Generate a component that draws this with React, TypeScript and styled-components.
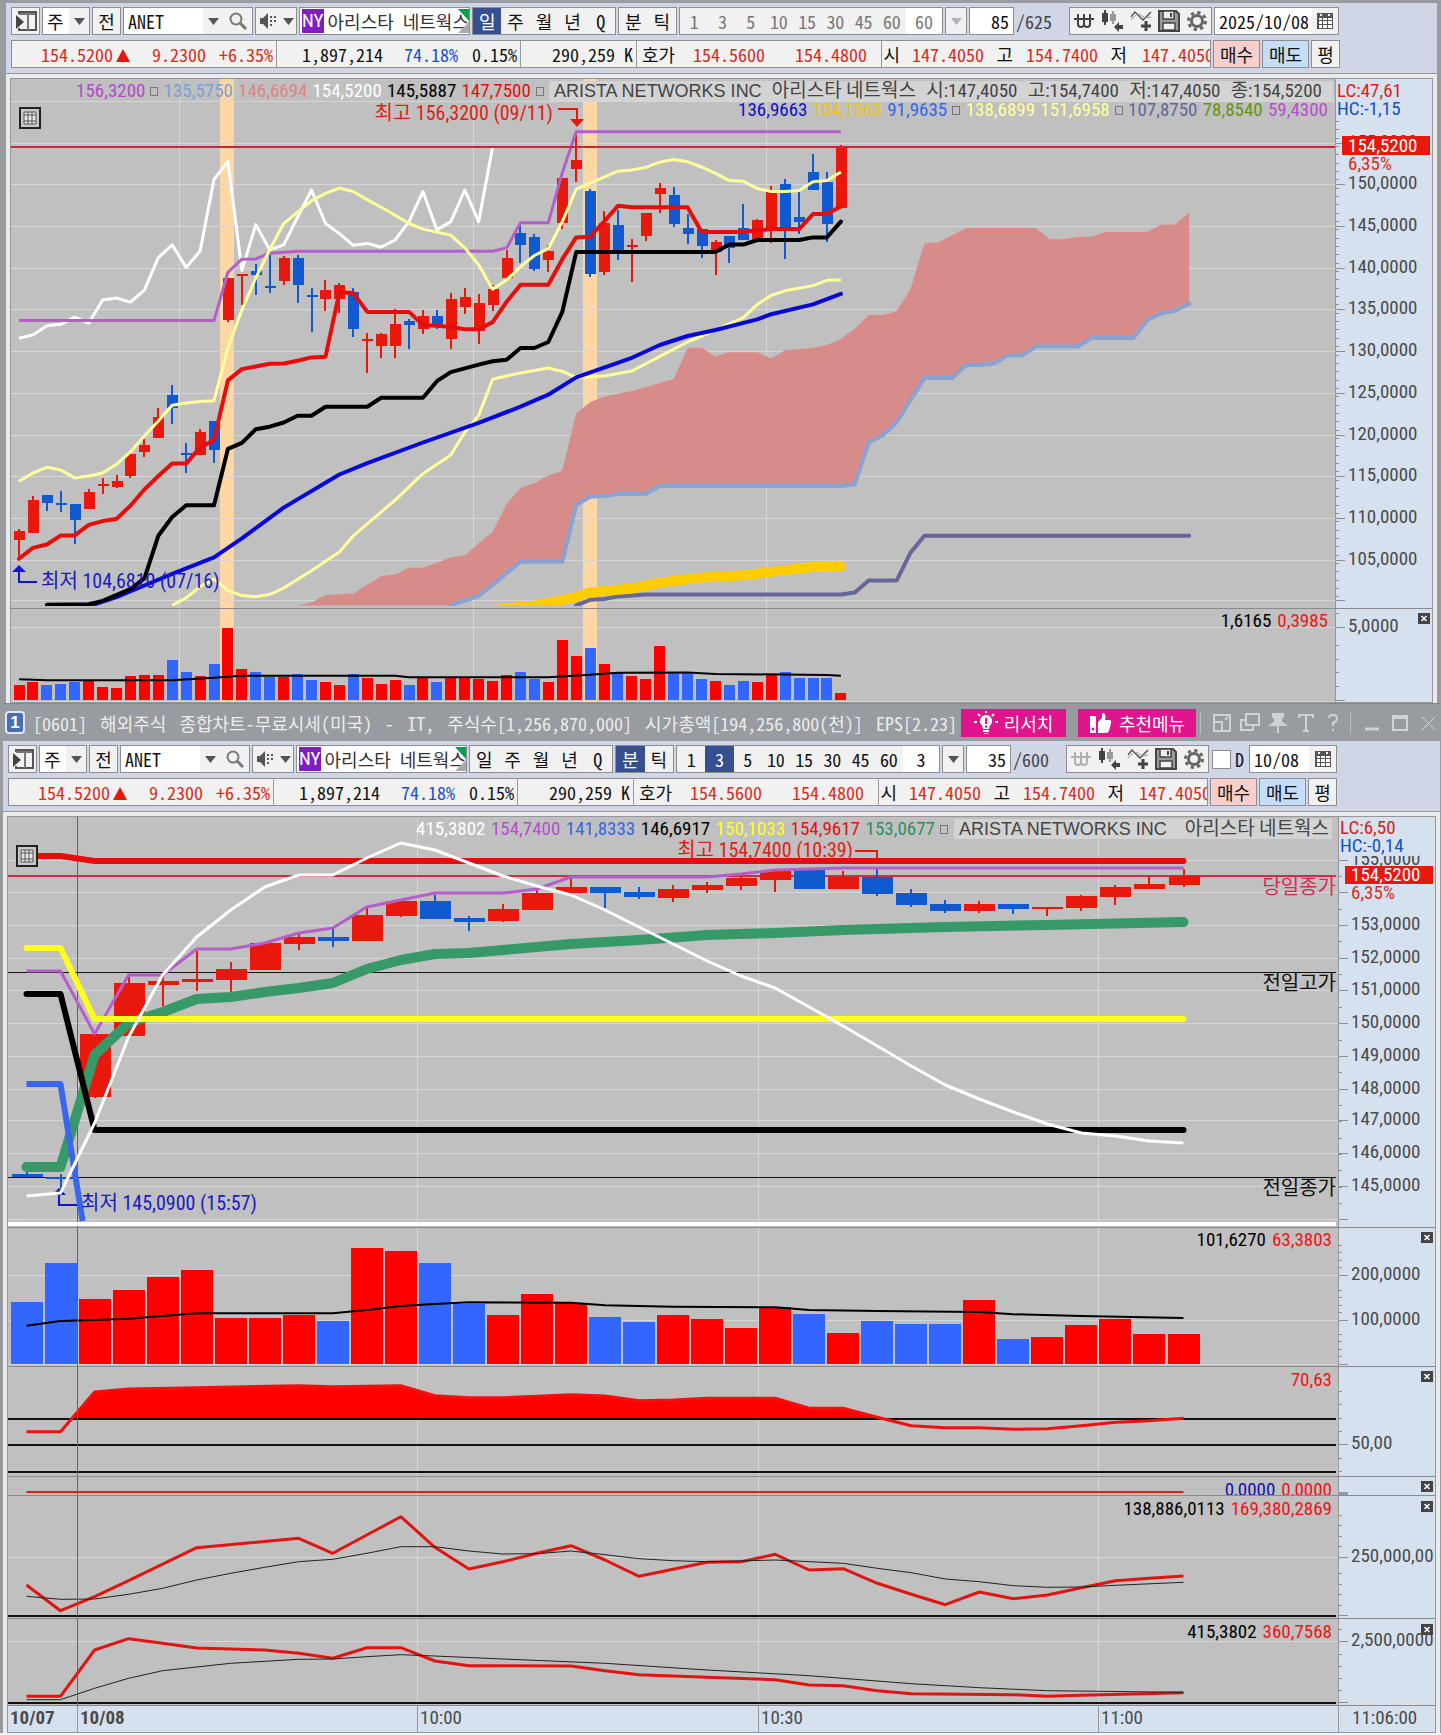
import React from "react";
import styled, { createGlobalStyle } from "styled-components";

const MONO = `"Noto Sans Mono CJK KR", "Noto Sans CJK KR", monospace`;
const NARROW = `"Liberation Sans Narrow", "Roboto Condensed", "Noto Sans CJK KR", sans-serif`;
const WIDE = `"Liberation Sans", "Noto Sans CJK KR", sans-serif`;

const RED = "#e8190c";
const BLUE = "#1159d0";
const VOL_RED = "#fe0000";
const VOL_BLUE = "#3366ff";
const GRID = "#d6d6d6";
const EDGE = "#8e8e92";

const GlobalStyle = createGlobalStyle`
  * { box-sizing: border-box; }
  body { margin: 0; background: #f4f4f4; font-family: ${MONO}; font-size: 18px; line-height: 20px; }
  button, input, select { font: inherit; margin: 0; border-radius: 0; }
  svg { display: block; }
`;

/* ---------- window chrome ---------- */

const Page = styled.main`
  min-width: 1440px;
`;

const Window = styled.section<{ $main?: boolean }>`
  background: #989ca1;
  padding: ${(p) => (p.$main ? "3px 4px 0 6px" : "0 1px 0 3px")};
`;

const Tools = styled.div`
  background: #d0d6e6;
  display: flex;
  flex-direction: column;
  gap: 5px;
  padding: 4px 5px 5px;
`;

const Row = styled.div`
  display: flex;
  gap: 2px;
  height: 28px;
`;

const Group = styled.div<{ $w: number }>`
  display: flex;
  width: ${(p) => p.$w}px;
  border: 1px solid ${EDGE};
  background: #f1f1f1;
  & > * + * { border-left: 1px solid ${EDGE}; }
`;

const Btn = styled.button<{ $on?: boolean; $dim?: boolean; $w?: number; $bg?: string }>`
  flex: ${(p) => (p.$w ? "none" : "1 1 0")};
  width: ${(p) => (p.$w ? `${p.$w}px` : "auto")};
  min-width: 0;
  padding: 0;
  border: 0;
  display: flex;
  align-items: center;
  justify-content: center;
  background: ${(p) => (p.$on ? "#36508f" : p.$bg ?? "#f1f1f1")};
  color: ${(p) => (p.$on ? "#fff" : p.$dim ? "#777" : "#111")};
`;

const Field = styled.input<{ $w: number; $align?: string; $dim?: boolean }>`
  width: ${(p) => p.$w}px;
  border: 0;
  padding: 0 4px;
  background: #fff;
  color: ${(p) => (p.$dim ? "#777" : "#111")};
  text-align: ${(p) => p.$align ?? "left"};
`;

const Pick = styled.select`
  width: 26px;
  border: 0;
  padding: 0 0 0 4px;
  appearance: none;
  background: #fff;
  color: #111;
`;

const Symbol = styled.div`
  position: relative;
  display: flex;
  align-items: center;
  gap: 4px;
  width: 171px;
  overflow: hidden;
  white-space: nowrap;
  border: 1px solid ${EDGE};
  background: #fff;
  padding-left: 2px;
  color: #333;
`;

const Exchange = styled.span`
  background: #7f1fc0;
  color: #fff;
  width: 24px;
  line-height: 24px;
  text-align: center;
  font-family: ${NARROW};
  font-size: 19px;
`;

const Corner = styled.svg`
  position: absolute;
  right: 0;
  top: 1px;
`;

const Total = styled.span`
  width: 51px;
  line-height: 28px;
  color: #444;
`;

const CheckLabel = styled.label`
  display: flex;
  align-items: center;
  gap: 4px;
  margin: 0 3px 0 1px;
  color: #113;
`;

const Check = styled.input`
  appearance: none;
  width: 19px;
  height: 19px;
  border: 1px solid ${EDGE};
  background: #fff;
`;

const QuoteBox = styled.div`
  display: flex;
  width: 1200px;
  overflow: hidden;
  border: 1px solid ${EDGE};
  background: #f1f1f1;
  line-height: 26px;
`;

const Cell = styled.span<{ $w: number; $c?: string; $rule?: boolean }>`
  flex: none;
  width: ${(p) => p.$w}px;
  text-align: right;
  white-space: nowrap;
  color: ${(p) => p.$c ?? "#111"};
  border-right: ${(p) => (p.$rule ? "1px solid #999" : "0")};
  padding-right: ${(p) => (p.$rule ? 3 : 0)}px;
`;

const Up = styled.svg`
  display: inline-block;
  margin-left: 3px;
`;

const TitleBar = styled.header`
  display: flex;
  align-items: center;
  height: 38px;
  color: #ececec;
  white-space: nowrap;
  border-top: 1px solid #85898e;
  padding-left: 2px;
`;

const Badge = styled.span`
  width: 20px;
  height: 23px;
  border: 2px solid #dfe6f5;
  border-radius: 4px;
  background: #4a6cb0;
  color: #fff;
  font: bold 17px/19px ${WIDE};
  text-align: center;
`;

const Title = styled.h1`
  display: flex;
  justify-content: space-between;
  margin: 0 4px 0 8px;
  width: 924px;
  font-size: 18px;
  font-weight: 400;
`;

const Promo = styled.button<{ $w: number }>`
  display: flex;
  align-items: center;
  justify-content: center;
  gap: 6px;
  width: ${(p) => p.$w}px;
  height: 28px;
  margin-right: 12px;
  padding: 0;
  border: 0;
  background: #e0148c;
  color: #fff;
`;

const WinBtns = styled.div`
  display: flex;
  flex: 1;
  align-items: center;
  justify-content: space-between;
  padding-right: 1px;
  margin-left: -8px;
`;

const WinBtn = styled.button`
  border: 0;
  padding: 0;
  background: none;
  color: #cfd1d4;
`;

const Rule = styled.span`
  width: 1px;
  height: 22px;
  margin-right: 4px;
  background: #b9bcc0;
`;

/* ---------- chart frame ---------- */

const Frame = styled.div`
  border-top: 1px solid #96969a;
  background: #ebebeb;
  padding: 4px 4px 0;
`;

const Board = styled.div`
  border: 1px solid #96969a;
`;

const Panel = styled.div<{ $h: number; $last?: boolean }>`
  display: flex;
  height: ${(p) => p.$h}px;
  box-sizing: content-box;
  border-bottom: ${(p) => (p.$last ? "0" : "1px solid #8a8a8c")};
`;

const Plot = styled.div`
  position: relative;
  flex: 1;
  min-width: 0;
  overflow: hidden;
  background: #c0c0c0;
  & > svg { width: 100%; height: 100%; }
`;

const AxisBox = styled.div`
  width: 97px;
  border-left: 1px solid #98989c;
  background: #d6e1ef;
`;

const Legend = styled.div<{ $left?: number; $top: number; $right: number }>`
  position: absolute;
  top: ${(p) => p.$top}px;
  right: ${(p) => p.$right}px;
  left: ${(p) => (p.$left !== undefined ? `${p.$left}px` : "auto")};
  display: flex;
  align-items: center;
  justify-content: space-between;
  column-gap: ${(p) => (p.$left !== undefined ? 2 : 6)}px;
  font: 19px/20px ${NARROW};
  white-space: nowrap;
  & > * { flex: none; }
`;

const Val = styled.span<{ $c: string }>`
  color: ${(p) => p.$c};
`;

const Dot = styled.i`
  width: 8px;
  height: 9px;
  border: 1px solid #777;
`;

const Name = styled.span<{ $w: number; $end: number }>`
  display: flex;
  justify-content: space-between;
  width: ${(p) => p.$w}px;
  padding: 0 ${(p) => p.$end}px 0 5px;
  background: #d3d3d3;
  color: #444;
`;

const Latin = styled.span`
  font: 18px/20px ${WIDE};
`;

const Tag = styled.span<{ $x?: number; $r?: number; $y: number; $c: string }>`
  position: absolute;
  left: ${(p) => (p.$x !== undefined ? `${p.$x}px` : "auto")};
  right: ${(p) => (p.$r !== undefined ? `${p.$r}px` : "auto")};
  top: ${(p) => p.$y}px;
  font: 20px/20px ${NARROW};
  white-space: nowrap;
  color: ${(p) => p.$c};
`;

const TimeRow = styled.div`
  display: grid;
  grid-template-columns: 69px 340px 341px 340px 1fr 97px;
  height: 26px;
  background: #d6e1ef;
  font: 19px/24px ${NARROW};
  color: #4a4a4a;
`;

const Time = styled.span<{ $bold?: boolean; $pad?: number }>`
  border-left: 1px solid #98989c;
  padding-left: ${(p) => p.$pad ?? 2}px;
  font-weight: ${(p) => (p.$bold ? 700 : 400)};
  &:first-child { border-left: 0; }
`;

/* ---------- icons ---------- */

const Caret = ({ dim }: { dim?: boolean }) => (
  <svg width="11" height="7" viewBox="0 0 11 7"><path d="M0 0H11L5.500 7Z" fill={dim ? "#b4b4b4" : "#555"} /></svg>
);
const PaneIcon = () => (
  <svg width="22" height="22" viewBox="0 0 22 22">
    <path d="M4 2H21V20H4" fill="none" stroke="#555" strokeWidth="2" />
    <path d="M4 3H20V5H4ZM12 5H14V20H12Z" fill="#777" />
    <path d="M1 5L9 12L1 19Z" fill="#444" /><path d="M4 1V4M4 18V21" stroke="#555" strokeWidth="2" />
  </svg>
);
const SearchIcon = () => (
  <svg width="20" height="20" viewBox="0 0 20 20" fill="none" stroke="#777">
    <circle cx="8" cy="8" r="5.500" strokeWidth="2" /><path d="M12 12L18 18" strokeWidth="3" />
  </svg>
);
const SpeakerIcon = () => (
  <svg width="20" height="18" viewBox="0 0 20 18" fill="#555">
    <path d="M1 6H4L9 1V17L4 12H1Z" /><path d="M11 4h2v2h-2zM15 4h2v2h-2zM11 8h2v2h-2zM15 8h2v2h-2zM11 12h2v2h-2z" />
  </svg>
);
const WonIcon = ({ dim }: { dim?: boolean }) => (
  <svg width="22" height="16" viewBox="0 0 22 16" fill="none" stroke={dim ? "#b0b0b0" : "#444"} strokeWidth="2">
    <path d="M5 1V11Q5 14 8 14Q11 14 11 11V1M11 11Q11 14 14 14Q17 14 17 11V1M1 6H21" />
  </svg>
);
const CandleIcon = () => (
  <svg width="24" height="24" viewBox="0 0 24 24">
    <path d="M2 4h6v9h-6zM4 1h2v15h-2z" fill="#444" /><path d="M10 5h6v7h-6zM12 2h2v13h-2z" fill="#999" />
    <path d="M14 18L19 13V16H23V20H19V23Z" fill="#444" />
  </svg>
);
const LineIcon = () => (
  <svg width="24" height="24" viewBox="0 0 24 24" fill="none">
    <path d="M2 8L6 3L14 11L22 3" stroke="#555" strokeWidth="1.500" /><path d="M2 11L7 6M10 5L16 9L22 8" stroke="#999" />
    <path d="M17 12V22M12 17H22" stroke="#444" strokeWidth="3" />
  </svg>
);
const SaveIcon = () => (
  <svg width="24" height="24" viewBox="0 0 24 24">
    <path d="M2 2H19L22 5V22H2Z" fill="#999" stroke="#444" strokeWidth="2" />
    <path d="M6 2H17V10H6Z" fill="#eee" stroke="#444" strokeWidth="1.500" /><path d="M13 4h2v4h-2z" fill="#444" />
    <path d="M6 14H18V21H6Z" fill="#f4f4f4" stroke="#444" strokeWidth="1.500" />
  </svg>
);
const GearIcon = () => (
  <svg width="22" height="22" viewBox="0 0 22 22" fill="none" stroke="#666">
    <circle cx="11" cy="11" r="5.500" strokeWidth="3" />
    <circle cx="11" cy="11" r="8.500" strokeWidth="3" strokeDasharray="3.300 3.375" />
  </svg>
);
const CalendarIcon = () => (
  <svg width="18" height="18" viewBox="0 0 18 18">
    <path d="M1 1H17V17H1Z" fill="#555" />
    <path d="M3 6h3v2h-3zM7 6h4v2h-4zM12 6h4v2h-4zM3 9h3v3h-3zM7 9h4v3h-4zM12 9h4v3h-4zM3 13h3v3h-3zM7 13h4v3h-4zM12 13h4v3h-4zM4 2h2v2h-2zM12 2h2v2h-2z" fill="#fff" />
  </svg>
);
const BulbIcon = () => (
  <svg width="24" height="24" viewBox="0 0 24 24">
    <path d="M12 4a6 6 0 0 1 4 10.500L15 18H9L8 14.500A6 6 0 0 1 12 4ZM9 19h6v2h-6zM10 22h4v1h-4z" fill="#fff" />
    <path d="M12 7V13M12 14.500V16.500" stroke="#e0148c" strokeWidth="2" />
    <path d="M12 0V2M4 3L6 5M20 3L18 5M0 11H3M21 11H24" stroke="#fff" strokeWidth="2" />
  </svg>
);
const ThumbIcon = () => (
  <svg width="24" height="22" viewBox="0 0 24 22" fill="#fff">
    <path d="M1 4h6v17h-6zM9 10L13 6V2Q14 0 16 2Q17 4 16 8H21Q23 9 22 11L20 19Q19 21 17 21H9Z" /><circle cx="4" cy="17" r="1.500" fill="#e0148c" />
  </svg>
);
const GridMark = ({ x, y }: { x: number; y: number }) => (
  <g transform={`translate(${x} ${y})`}>
    <path d="M0 0H20V20H0Z" fill="#c8c8c8" stroke="#222" strokeWidth="2" />
    <path d="M4 4H16V16H4Z" fill="#e8e8e8" /><path d="M4 4H16V16H4ZM8 4V16M12 4V16M4 7H16M4 13H16" fill="none" stroke="#555" />
  </g>
);

/* ---------- chart geometry ---------- */

type Pt = [number, number];
type Bar = [number, number, number, number, number];

const flat = (s: string): number[] => s.trim().split(/[\s,]+/).map(Number);
const pairs = (s: string): Pt[] => {
  const n = flat(s);
  return n.reduce<Pt[]>((a, v, i) => (i % 2 ? a : [...a, [v, n[i + 1]]]), []);
};
const dayX = (i: number) => 19 + i * 13.93;
const dayY = (v: number) => 120 + v * 0.3763;
const minX = (i: number) => 26.5 + i * 34.03;
const subY = (v: number) => 1220 + v / 3;
const same = (v: number) => v;

const trace = (s: string, fx: (n: number) => number, fy: (n: number) => number) =>
  pairs(s).map(([a, b]) => `${fx(a).toFixed(1)},${fy(b).toFixed(1)}`).join(" ");

const Day = ({ d, c, w, round }: { d: string; c: string; w: number; round?: boolean }) => (
  <polyline points={trace(d, dayX, dayY)} fill="none" stroke={c} strokeWidth={w} strokeLinejoin="round" strokeLinecap={round ? "round" : "butt"} />
);
const Min = ({ d, c, w, fy = same, round }: { d: string; c: string; w: number; fy?: (n: number) => number; round?: boolean }) => (
  <polyline points={trace(d, minX, fy)} fill="none" stroke={c} strokeWidth={w} strokeLinejoin="round" strokeLinecap={round ? "round" : "butt"} />
);

/* up flag, body top, body bottom, high, low */
const dayBars: Bar[] = [
  [1, 1091, 1117, 1086, 1166], [1, 1011, 1098, 1000, 1098], [0, 996, 1018, 996, 1038], [0, 1017, 1021, 987, 1043],
  [0, 1020, 1062, 1020, 1126], [1, 989, 1034, 980, 1034], [1, 966, 969, 952, 995], [1, 960, 974, 943, 979],
  [1, 888, 946, 880, 951], [1, 864, 882, 848, 895], [1, 788, 846, 765, 846], [0, 732, 766, 704, 808],
  [0, 885, 889, 859, 938], [1, 828, 889, 820, 889], [0, 800, 878, 800, 911], [1, 421, 532, 421, 537],
  [1, 409, 415, 409, 492], [0, 402, 412, 383, 465], [0, 442, 446, 358, 460], [1, 366, 429, 362, 438],
  [0, 366, 439, 358, 485], [0, 466, 471, 446, 563], [1, 453, 475, 426, 508], [1, 438, 475, 433, 512],
  [0, 458, 555, 446, 577], [1, 581, 585, 565, 672], [1, 569, 600, 565, 633], [1, 542, 600, 502, 633],
  [0, 534, 546, 528, 608], [1, 521, 555, 505, 568], [0, 521, 545, 505, 555], [1, 477, 583, 461, 609],
  [1, 470, 496, 446, 516], [1, 486, 562, 462, 595], [1, 450, 492, 439, 508], [1, 366, 420, 345, 420],
  [0, 301, 332, 280, 380], [0, 310, 395, 303, 401], [1, 349, 373, 331, 405], [1, 155, 273, 155, 290],
  [1, 107, 129, 36, 166], [0, 190, 408, 184, 416], [1, 274, 404, 242, 412], [0, 278, 346, 240, 373],
  [1, 332, 336, 317, 430], [1, 247, 308, 247, 321], [1, 182, 196, 167, 248], [0, 198, 276, 178, 284],
  [0, 287, 303, 250, 330], [0, 290, 336, 290, 368], [1, 325, 350, 320, 412], [0, 307, 339, 307, 381],
  [0, 287, 320, 222, 320], [1, 266, 315, 262, 315], [1, 190, 295, 175, 328], [0, 170, 296, 158, 369],
  [0, 258, 271, 190, 304], [0, 138, 185, 90, 185], [0, 165, 276, 138, 325], [1, 72, 234, 66, 234],
];

const dayVolume = "1 1502 1 1494 0 1502 0 1499 0 1494 1 1492 1 1507 1 1510 1 1478 1 1474 1 1474 0 1434 0 1466 1 1478 0 1446 1 1350 1 1459 0 1467 0 1480 1 1479 0 1471 0 1487 1 1494 1 1502 0 1471 1 1482 1 1498 1 1487 0 1502 1 1484 0 1494 1 1484 1 1484 1 1486 1 1490 1 1474 0 1466 0 1485 1 1494 1 1382 1 1425 0 1402 1 1446 0 1470 1 1478 1 1486 1 1398 0 1472 0 1472 0 1486 1 1490 0 1502 0 1490 1 1494 1 1476 0 1466 0 1482 0 1482 0 1482 1 1522";

const lagging = "0 580 1 571 2 547 3 543 4 524 5 540 6 478 7 473 8 484 9 452 10 366 11 332 12 392 13 348 14 158 15 110 16 400 17 278 18 345 19 332 20 258 21 186 22 275 23 302 24 333 25 328 26 338 27 319 28 270 29 190 30 292 31 270 32 186 33 270 34 72";
const topBand = "0 533 14 533 15 405 16 370 17 369 18 354 20 349 34 349 35 340 36 273 38 273 39 140 40 31 59 31";
const upper = "0 960 1 938 2 923 3 930 4 951 5 946 6 938 7 915 8 882 9 840 10 800 11 758 12 752 13 748 14 746 15 605 16 505 17 420 18 345 19 275 20 245 21 215 22 195 23 181 24 190 25 212 26 232 27 253 28 275 29 290 30 298 31 306 32 340 33 385 34 450 35 425 36 390 37 360 38 342 39 270 40 184 41 168 42 152 43 136 44 133 45 126 46 112 47 105 48 111 49 125 50 142 51 161 52 163 53 182 54 190 55 190 56 187 57 164 58 161 59 138";
const lower = "11 1290 12 1270 13 1240 14 1220 15 1250 16 1264 17 1267 18 1261 19 1244 21 1198 23 1148 24 1105 27 1010 29 940 31 890 32 830 33 785 34 689 36 672 38 659 39 668 40 684 42 680 44 667 46 628 48 590 50 558 52 525 53 490 54 466 55 454 57 440 58 426 59 425";
const conversion = "0 1166 1 1137 2 1128 3 1104 4 1104 5 1076 6 1066 7 1060 8 1025 9 982 10 946 11 913 12 913 13 870 14 850 15 692 16 662 17 655 18 648 19 647 20 640 21 631 22 629 23 458 24 460 25 510 28 510 29 545 30 547 31 550 32 556 33 556 34 537 35 483 36 438 38 438 39 370 40 312 41 310 42 270 43 228 44 232 48 232 49 298 52 298 53 293 54 290 56 290 57 250 58 250 59 230";
const base = "2 1288 5 1287 6 1278 8 1247 9 1218 10 1105 11 1055 12 1024 14 1024 15 874 16 858 17 822 18 815 19 804 20 786 21 786 22 762 25 762 26 738 29 738 30 694 31 670 32 660 33 650 34 641 35 637 36 606 37 606 38 590 39 510 40 351 50 351 51 331 52 331 53 319 56 319 57 312 58 312 59 270";
const average = "5 1292 7 1268 9 1237 11 1206 14 1162 16 1112 19 1030 23 942 25 912 29 857 33 805 36 762 38 730 40 684 44 632 46 598 48 574 50 558 53 530 54 516 57 490 59 462";
const cloudTop = "20 1290 21 1282 22 1263 24 1258 26 1212 27 1208 28 1190 29 1190 31 1163 32 1157 33 1125 34 1095 35 1020 36 978 37 965 38 945 39 932 40 780 41 750 42 735 44 720 47 688 48 605 49 605 50 628 51 617 53 617 54 634 55 612 57 605 58 598 59 582 60 555 61 518 62 518 63 508 64 450 65 328 66 325 68 287 73 287 74 317 75 317 76 310 77 310 78 298 81 298 82 278 83 278 84 246";
const cloudLow = "31 1290 33 1265 34 1235 36 1174 39 1174 40 1023 41 1001 42 999 43 994 45 993 46 973 59 973 60 968 61 857 62 838 63 803 64 745 65 686 67 686 68 651 69 651 70 647 71 626 72 626 73 602 76 602 77 579 80 579 81 532 82 514 83 507 84 489";
const slate = "40 1290 41 1275 42 1273 43 1266 45 1261 59 1261 60 1256 61 1224 63 1224 64 1150 65 1105 84 1105";
const gold = "34 1302 37 1291 40 1268 41 1255 44 1245 46 1230 49 1216 52 1210 55 1196 57 1188 59 1186";
const dayVolAvg = "0 1486 2 1489 11 1489 14 1482 16 1477 27 1477 28 1481 38 1481 41 1474 43 1469 48 1468 50 1472 58 1475 59 1477";

const minBars: Bar[] = [
  [0, 1174, 1177, 1172, 1177], [0, 1177, 1179, 1174, 1190], [1, 1034, 1097, 1034, 1098], [1, 983, 1036, 975, 1039],
  [1, 981, 985, 976, 1006], [1, 979, 982, 951, 991], [1, 969, 980, 962, 993], [1, 943, 970, 943, 970],
  [1, 937, 944, 932, 950], [0, 937, 941, 928, 947], [1, 915, 941, 907, 941], [1, 901, 916, 901, 917],
  [0, 901, 919, 895, 919], [0, 918, 922, 916, 931], [1, 909, 921, 904, 922], [1, 893, 910, 890, 910],
  [1, 887, 893, 877, 896], [0, 887, 893, 887, 908], [0, 892, 897, 887, 899], [1, 889, 898, 885, 902],
  [1, 885, 890, 882, 893], [1, 878, 886, 876, 890], [1, 871, 880, 870, 892], [0, 870, 889, 870, 889],
  [1, 877, 889, 871, 889], [0, 877, 894, 869, 896], [0, 893, 905, 889, 907], [0, 904, 911, 900, 913],
  [1, 904, 911, 901, 913], [0, 904, 909, 904, 914], [1, 907, 909, 907, 916], [1, 896, 908, 895, 911],
  [1, 887, 897, 885, 905], [1, 884, 889, 877, 889], [1, 876, 885, 869, 887],
];
const minVolume = "0 245 0 128 1 236 1 209 1 172 1 151 1 294 1 294 1 286 0 303 1 83 1 92 0 128 0 252 1 286 1 222 1 250 0 290 0 307 1 286 1 298 1 325 1 260 0 281 1 339 0 303 0 312 0 312 1 240 0 357 1 352 1 316 1 298 1 343 1 343";
const minVolAvg = "0 317 1 303 2 300 3 296 5 280 9 280 10 270 11 258 12 252 13 247 16 248 17 256 19 260 22 262 23 270 25 273 28 276 29 283 31 288 34 294";
const whiteLine = "0 1196 1 1193 2 1123 3 1037 4 975 5 937 6 910 7 887 8 875 9 875 10 858 11 843 12 850 13 863 14 876 15 886 16 895 17 910 18 927 19 944 20 961 21 976 22 988 23 1007 24 1026 25 1046 26 1066 27 1085 28 1099 29 1112 30 1124 31 1133 32 1136 33 1141 34 1143";
const purpleLine = "0 971 1 971 2 1034 3 975 4 975 5 949 6 949 7 943 8 933 9 928 10 907 11 900 12 893 14 893 15 889 16 877 20 877 21 874 22 870 24 868 34 868";
const greenLine = "0 1167 1 1167 2 1055 3 1023 4 1012 5 999 6 997 7 992 8 988 9 983 10 969 11 960 12 954 13 953 14 950 16 944 18 940 20 935 22 933 24 930 27 927 30 925 34 922";
const rsi = "0 635 1 635 2 516 3 507 5 503 8 497 9 500 11 497 12 527 13 533 14 533 16 524 17 528 18 542 19 540 20 535 22 535 23 565 24 565 25 592 26 617 27 623 28 623 29 628 30 626 31 617 32 607 33 602 34 595";
const rsiFill = "1.32 597 2 516 3 507 5 503 8 497 9 500 11 497 12 527 13 533 14 533 16 524 17 528 18 542 19 540 20 535 22 535 23 565 24 565 25 592 25.2 597";
const flowRed = "0 1095 1 1172 2 1130 3 1082 5 983 8 955 9 1000 10 945 11 890 12 982 13 1047 14 1025 15 1000 16 977 17 1020 18 1069 19 1048 20 1027 21 1025 22 1003 23 1050 24 1046 25 1090 26 1123 27 1154 28 1116 29 1136 30 1125 31 1103 32 1082 33 1075 34 1068";
const flowBlack = "0 1129 1 1138 2 1137 3 1123 4 1105 5 1080 6 1060 7 1042 8 1025 9 1018 10 1000 11 980 12 980 13 993 14 1002 15 1001 16 993 17 1004 18 1016 19 1022 20 1025 22 1020 24 1030 25 1045 26 1058 27 1077 28 1085 29 1097 30 1102 31 1101 32 1096 34 1087";
const rateRed = "0 1429 1 1429 2 1290 3 1256 4 1270 5 1284 7 1290 8 1300 9 1315 10 1283 11 1283 12 1323 13 1337 16 1338 17 1352 18 1364 20 1372 22 1379 23 1395 24 1397 25 1412 26 1421 29 1424 30 1429 31 1426 34 1418";
const rateBlack = "0 1439 1 1439 2 1405 3 1375 4 1352 6 1330 8 1318 9 1317 10 1310 11 1304 12 1308 14 1317 17 1330 20 1350 23 1367 26 1391 28 1403 30 1412 34 1417";

const Candles = ({ bars, fx, fy, w }: { bars: Bar[]; fx: (n: number) => number; fy: (n: number) => number; w: number }) => (
  <>
    {bars.map(([up, t, b, hi, lo], i) => {
      const x = Math.round(fx(i));
      const top = Math.round(fy(t));
      return (
        <g key={i} fill={up ? RED : BLUE} shapeRendering="crispEdges">
          <rect x={x - 1} y={fy(hi)} width={2} height={fy(lo) - fy(hi)} />
          <rect x={x - Math.floor(w / 2)} y={top} width={w} height={Math.max(2, Math.round(fy(b)) - top)} />
        </g>
      );
    })}
  </>
);

const Volumes = ({ d, fx, fy, w, floor }: { d: string; fx: (n: number) => number; fy: (n: number) => number; w: number; floor: number }) => (
  <>
    {pairs(d).map(([up, t], i) => (
      <rect key={i} shapeRendering="crispEdges" fill={up ? VOL_RED : VOL_BLUE} x={Math.round(fx(i) - w / 2)} y={Math.round(fy(t))} width={w} height={floor - Math.round(fy(t))} />
    ))}
  </>
);

interface CanvasProps { x: number; y: number; w: number; h: number; rows?: number[]; cols: number[]; children?: React.ReactNode }
const Canvas = ({ x, y, w, h, rows = [], cols, children }: CanvasProps) => (
  <svg viewBox={`${x} ${y} ${w} ${h}`} preserveAspectRatio="none" aria-hidden="true">
    <g fill={GRID} shapeRendering="crispEdges">
      {cols.map((c) => <rect key={c} x={c} y={y} width={1} height={h} />)}
      {rows.map((r) => <rect key={r} x={x} y={r} width={w} height={1} />)}
    </g>
    {children}
  </svg>
);

interface AxisProps { y: number; h: number; major?: [number, string][]; minor?: number[]; close?: number; children?: React.ReactNode }
const Axis = ({ y, h, major = [], minor = [], close, children }: AxisProps) => (
  <AxisBox>
    <svg width="96" height={h} viewBox={`0 ${y} 96 ${h}`} fontFamily={NARROW} fontSize="19" fill="#4a4a4a">
      <g fill="#8e8e92" shapeRendering="crispEdges">
        {major.map(([t]) => <rect key={t} x={0} y={t} width={9} height={1} />)}
        {minor.map((t) => <rect key={t} x={0} y={t} width={3} height={1} />)}
      </g>
      {close !== undefined && (
        <g transform={`translate(82 ${close})`}>
          <rect width="12" height="11" fill="#444" /><path d="M3.500 3L8.500 8M8.500 3L3.500 8" stroke="#fff" strokeWidth="1.500" />
        </g>
      )}
      {major.map(([t, s]) => s && <text key={t} x={12} y={t + 5}>{s}</text>)}
      {children}
    </svg>
  </AxisBox>
);

const steps = (from: number, to: number, by: number) => {
  const out: number[] = [];
  for (let v = from; v <= to; v += by) out.push(Math.round(v));
  return out;
};

/* ---------- toolbars ---------- */

const Toolbar = ({ on, dimMinutes, minute, count, total, date }: { on: string; dimMinutes?: boolean; minute: string; count: string; total: string; date: string }) => {
  const short = date.length < 6;
  return (
    <Row>
      <Group $w={29}><Btn aria-label="패널"><PaneIcon /></Btn></Group>
      <Group $w={48}>
        <Pick aria-label="구분" defaultValue="주"><option>주</option></Pick>
        <Btn aria-label="구분 열기"><Caret /></Btn>
      </Group>
      <Group $w={29}><Btn>전</Btn></Group>
      <Group $w={130}>
        <Field $w={79} aria-label="종목코드" defaultValue="ANET" />
        <Btn $w={21} aria-label="종목 목록"><Caret /></Btn>
        <Btn aria-label="검색"><SearchIcon /></Btn>
      </Group>
      <Group $w={42}>
        <Btn aria-label="음성"><SpeakerIcon /></Btn>
        <Btn $w={15} aria-label="음성 메뉴"><Caret /></Btn>
      </Group>
      <Symbol>
        <Exchange>NY</Exchange>아리스타 네트웍스
        <Corner width="14" height="24" viewBox="0 0 14 24"><path d="M3 0H14V12Z" fill="#0c9c50" /><path d="M14 13V24H3Z" fill="#aaa" /></Corner>
      </Symbol>
      <Group $w={144}>{["일", "주", "월", "년", "Q"].map((s) => <Btn key={s} $on={s === on}>{s}</Btn>)}</Group>
      <Group $w={59}>{["분", "틱"].map((s) => <Btn key={s} $on={s === on}>{s}</Btn>)}</Group>
      <Group $w={264}>
        {["1", "3", "5", "10", "15", "30", "45", "60"].map((s) => <Btn key={s} $dim={dimMinutes} $on={!dimMinutes && s === "3"}>{s}</Btn>)}
        <Field $w={36} $align="center" $dim={dimMinutes} aria-label="분 입력" defaultValue={minute} />
      </Group>
      <Group $w={22}><Btn aria-label="분 목록"><Caret dim={dimMinutes} /></Btn></Group>
      <Group $w={45}><Field $w={43} $align="right" aria-label="표시 개수" defaultValue={count} /></Group>
      <Total>/{total}</Total>
      <Group $w={143}>
        <Btn aria-label="원화"><WonIcon dim={short} /></Btn>
        <Btn aria-label="봉 추가"><CandleIcon /></Btn>
        <Btn aria-label="지표 추가"><LineIcon /></Btn>
        <Btn aria-label="저장"><SaveIcon /></Btn>
        <Btn aria-label="설정"><GearIcon /></Btn>
      </Group>
      {short && <CheckLabel><Check type="checkbox" />D</CheckLabel>}
      <Group $w={short ? 88 : 125}>
        <Field $w={short ? 59 : 97} aria-label="날짜" defaultValue={date} />
        <Btn aria-label="달력"><CalendarIcon /></Btn>
      </Group>
    </Row>
  );
};

const QuoteRow = () => (
  <Row>
    <QuoteBox>
      <Cell $w={118} $c="#dc2a1a">154.5200<Up width="14" height="13" viewBox="0 0 14 13"><path d="M7 0L14 13H0Z" fill={RED} /></Up></Cell>
      <Cell $w={76} $c="#dc2a1a">9.2300</Cell>
      <Cell $w={71} $c="#dc2a1a" $rule>+6.35%</Cell>
      <Cell $w={106}>1,897,214</Cell>
      <Cell $w={75} $c="#1c50c8">74.18%</Cell>
      <Cell $w={63} $rule>0.15%</Cell>
      <Cell $w={116} $rule>290,259 K</Cell>
      <Cell $w={38}>호가</Cell>
      <Cell $w={90} $c="#dc2a1a">154.5600</Cell>
      <Cell $w={102} $c="#dc2a1a">154.4800</Cell>
      <Cell $w={15} $rule />
      <Cell $w={18}>시</Cell>
      <Cell $w={84} $c="#dc2a1a">147.4050</Cell>
      <Cell $w={29}>고</Cell>
      <Cell $w={85} $c="#dc2a1a">154.7400</Cell>
      <Cell $w={29}>저</Cell>
      <Cell $w={87} $c="#dc2a1a">147.4050</Cell>
    </QuoteBox>
    <Group $w={47}><Btn $bg="#f8cfcb">매수</Btn></Group>
    <Group $w={47}><Btn $bg="#c5def5">매도</Btn></Group>
    <Group $w={29}><Btn>평</Btn></Group>
  </Row>
);

/* ---------- windows ---------- */

const dayRows = [101, 143, 184, 226, 268, 309, 351, 393, 435, 476, 518, 560, 600];
const dayCols = [179, 473, 766];
const minCols = [417, 758, 1098];

const Bands = ({ y, h }: { y: number; h: number }) => (
  <g fill="#ffd7a5"><rect x="220" y={y} width="14" height={h} /><rect x="583" y={y} width="14" height={h} /></g>
);
const Session = ({ y, h }: { y: number; h: number }) => <rect x="77" y={y} width="1" height={h} fill="#d0342c" />;
const Level = ({ y, c = "#111", w = 1 }: { y: number; c?: string; w?: number }) => (
  <rect x="0" y={y} width="1336" height={w} fill={c} shapeRendering="crispEdges" />
);

const DayWindow = () => (
  <Window $main>
    <Tools>
      <Toolbar on="일" dimMinutes minute="60" count="85" total="625" date="2025/10/08" />
      <QuoteRow />
    </Tools>
    <Frame>
      <Board>
        <Panel $h={529}>
          <Plot>
            <Canvas x={11} y={79} w={1324} h={529} rows={dayRows} cols={dayCols}>
              <clipPath id="dayClip"><rect x="11" y="79" width="1324" height="527" /></clipPath>
              <Bands y={79} h={529} />
              <g fill="#d6d6d6">{dayRows.map((r) => <path key={r} d={`M220 ${r}h14v1h-14zM583 ${r}h14v1h-14z`} />)}</g>
              <g clipPath="url(#dayClip)">
                <polygon points={`${trace(cloudTop, dayX, dayY)} ${trace(cloudLow, dayX, dayY).split(" ").reverse().join(" ")}`} fill="#d88c8a" />
                <Day d={cloudLow} c="#88a2d2" w={4} round />
                <Candles bars={dayBars} fx={dayX} fy={dayY} w={11} />
                <Day d={lagging} c="#fff" w={3} />
                <Day d={topBand} c="#b45fc8" w={3} />
                <Day d={slate} c="#666699" w={4} round />
                <Day d={lower} c="#ffff9c" w={3} />
                <Day d={average} c="#0808d8" w={4} round />
                <Day d={gold} c="#ffcc00" w={10} round />
                <Day d={base} c="#000" w={4} round />
                <Day d={conversion} c="#e80c0c" w={4} round />
                <Day d={upper} c="#ffff9c" w={3} />
              </g>
              <Level y={146} c="#c8283c" w={2} />
              <GridMark x={20} y={108} />
              <path d="M558 109H577V120" fill="none" stroke={RED} strokeWidth="2" /><path d="M570 119H584L577 127Z" fill={RED} />
              <path d="M19 570V582H37" fill="none" stroke="#1414c8" strokeWidth="2" /><path d="M12 572H26L19 565Z" fill="#1414e0" />
            </Canvas>
            <Legend $left={65} $right={2} $top={2}>
              <Val $c="#b04cc8">156,3200</Val><Dot /><Val $c="#7d9fd2">135,5750</Val><Val $c="#dc8480">146,6694</Val>
              <Val $c="#fff">154,5200</Val><Val $c="#000">145,5887</Val><Val $c="#e01010">147,7500</Val><Dot />
              <Name $w={784} $end={11}><Latin>ARISTA NETWORKS INC</Latin><span>아리스타 네트웍스</span><span>시:147,4050</span><span>고:154,7400</span><span>저:147,4050</span><span>종:154,5200</span></Name>
            </Legend>
            <Legend $left={727} $right={7} $top={21}>
              <Val $c="#1010c8">136,9663</Val><Val $c="#f0c814">104,1563</Val><Val $c="#3366e8">91,9635</Val><Dot />
              <Val $c="#ffff9c">138,6899</Val><Val $c="#ffff9c">151,6958</Val><Dot /><Val $c="#666699">107,8750</Val>
              <Val $c="#6a9410">78,8540</Val><Val $c="#b450c8">59,4300</Val>
            </Legend>
            <Tag $r={782} $y={24} $c="#e02014">최고 156,3200 (09/11)</Tag>
            <Tag $x={30} $y={492} $c="#1a1ac0">최저 104,6810 (07/16)</Tag>
          </Plot>
          <Axis y={79} h={529} minor={steps(121, 600, 8.34)}
            major={[[143, "155,0000"], [184, "150,0000"], [226, "145,0000"], [268, "140,0000"], [309, "135,0000"], [351, "130,0000"], [393, "125,0000"], [435, "120,0000"], [476, "115,0000"], [518, "110,0000"], [560, "105,0000"], [600, ""]]}>
            <rect x="6" y="136" width="88" height="19" fill={RED} />
            <text x="12" y="152" fill="#fff">154,5200</text>
            <text x="12" y="170" fill="#dc2a1a">6,35%</text>
            <text x="1" y="97" fill="#dc1e14">LC:47,61</text>
            <text x="1" y="115" fill="#1450c8">HC:-1,15</text>
          </Axis>
        </Panel>
        <Panel $h={93} $last>
          <Plot>
            <Canvas x={11} y={609} w={1324} h={93} rows={[627, 701]} cols={dayCols}>
              <Bands y={609} h={93} />
              <Volumes d={dayVolume} fx={dayX} fy={dayY} w={11} floor={700} />
              <Day d={dayVolAvg} c="#000" w={2} />
            </Canvas>
            <Legend $right={7} $top={2}><Val $c="#000">1,6165</Val><Val $c="#f01414">0,3985</Val></Legend>
          </Plot>
          <Axis y={609} h={93} major={[[627, "5,0000"], [700, ""]]} minor={[613, 645, 659, 672, 686]} close={613} />
        </Panel>
      </Board>
    </Frame>
  </Window>
);

const titleIcons: [string, React.ReactNode][] = [
  ["연결", <path d="M3 3H19V19H3ZM3 10H11V19M14 8L17 5" />],
  ["겹치기", <path d="M7 2H20V13H7ZM7 8H2V18H14V13" />],
  ["고정", <path d="M6 2H16V5L14 6V10L18 13H4L8 10V6L6 5ZM11 13V21" fill="currentColor" />],
  ["글꼴", <path d="M4 6V3H18V6M11 3V19M8 19H14" />],
  ["도움말", <path d="M7 6Q7 3 11 3Q15 3 15 6Q15 9 11 11V14M11 17V19" />],
];
const frameIcons: [string, React.ReactNode][] = [
  ["최소화", <path d="M4 17H18" strokeWidth="3" />],
  ["최대화", <path d="M4 4H18V18H4ZM4 6H18" />],
  ["닫기", <path d="M5 5L18 18M18 5L5 18" strokeWidth="1" />],
];
const iconButton = ([label, shape]: [string, React.ReactNode]) => (
  <WinBtn key={label} aria-label={label}>
    <svg width="22" height="22" viewBox="0 0 22 22" fill="none" stroke="currentColor" strokeWidth="2">{shape}</svg>
  </WinBtn>
);

const titleWords = "[0601] 해외주식 종합차트-무료시세(미국) - IT, 주식수[1,256,870,000] 시가총액[194,256,800(천)] EPS[2.23]".split(" ");

const MinuteWindow = () => (
  <Window>
    <TitleBar>
      <Badge>1</Badge>
      <Title>{titleWords.map((word) => <span key={word}>{word} </span>)}</Title>
      <Promo $w={105}><BulbIcon />리서치</Promo>
      <Promo $w={118}><ThumbIcon />추천메뉴</Promo>
      <WinBtns><Rule />{titleIcons.map(iconButton)}<Rule />{frameIcons.map(iconButton)}</WinBtns>
    </TitleBar>
    <Tools>
      <Toolbar on="분" minute="3" count="35" total="600" date="10/08" />
      <QuoteRow />
    </Tools>
    <Frame>
      <Board>
        <Panel $h={410}>
          <Plot>
            <Canvas x={8} y={817} w={1330} h={410} cols={minCols} rows={[860, 892, 925, 958, 990, 1023, 1056, 1089, 1120, 1153, 1186, 1219]}>
              <Session y={817} h={410} />
              <Level y={972} /><Level y={1177} />
              <Level y={875} c="#d02c48" w={2} />
              <Candles bars={minBars} fx={minX} fy={same} w={31} />
              <path d="M855 851H877V861" fill="none" stroke={RED} strokeWidth="2" />
              <path d="M59 1193V1205H80" fill="none" stroke="#1414c8" strokeWidth="2" /><path d="M52 1195H66L59 1188Z" fill="#1414c8" />
              <Min d="0 856 1 856 2 861 34 861" c="#e80c0c" w={6} round />
              <Min d={greenLine} c="#379868" w={10} round />
              <Min d={purpleLine} c="#b45fc8" w={3} />
              <Min d="0 994 1 994 2 1130 34 1130" c="#000" w={6} round />
              <Min d="0 1084 1 1084 1.65 1221" c="#3a66ee" w={6} />
              <Min d="0 948 1 948 2 1019 34 1019" c="#ffff1e" w={6} round />
              <Min d={whiteLine} c="#fff" w={3} />
              <Level y={1222} c="#fff" w={4} />
              <GridMark x={17} y={846} />
            </Canvas>
            <Legend $left={408} $right={6} $top={2}>
              <Val $c="#fff">415,3802</Val><Val $c="#b450c8">154,7400</Val><Val $c="#3366e8">141,8333</Val><Val $c="#000">146,6917</Val>
              <Val $c="#ffff1e">150,1033</Val><Val $c="#e81010">154,9617</Val><Val $c="#2e9062">153,0677</Val><Dot />
              <Name $w={378} $end={3}><Latin>ARISTA NETWORKS INC</Latin><span>아리스타 네트웍스</span></Name>
            </Legend>
            <Tag $r={485} $y={23} $c="#e02014">최고 154,7400 (10:39)</Tag>
            <Tag $x={73} $y={376} $c="#1a1ac0">최저 145,0900 (15:57)</Tag>
            <Tag $r={2} $y={60} $c="#e02850">당일종가</Tag>
            <Tag $r={2} $y={156} $c="#111">전일고가</Tag>
            <Tag $r={2} $y={361} $c="#111">전일종가</Tag>
          </Plot>
          <Axis y={817} h={410} minor={steps(876, 1219, 16.35)}
            major={[[860, "155,0000"], [892, ""], [925, "153,0000"], [958, "152,0000"], [990, "151,0000"], [1023, "150,0000"], [1056, "149,0000"], [1089, "148,0000"], [1120, "147,0000"], [1153, "146,0000"], [1186, "145,0000"], [1219, ""]]}>
            <rect x="0" y="817" width="80" height="39" fill="#d6e1ef" />
            <rect x="6" y="866" width="88" height="18" fill={RED} />
            <text x="12" y="881" fill="#fff">154,5200</text>
            <text x="12" y="899" fill="#dc2a1a">6,35%</text>
            <text x="1" y="834" fill="#dc1e14">LC:6,50</text>
            <text x="1" y="852" fill="#1450c8">HC:-0,14</text>
          </Axis>
        </Panel>
        <Panel $h={138}>
          <Plot>
            <Canvas x={8} y={1228} w={1330} h={138} cols={minCols} rows={[1275, 1320, 1364]}>
              <Volumes d={minVolume} fx={minX} fy={subY} w={32} floor={1364} />
              <Min d={minVolAvg} c="#000" w={2} fy={subY} />
              <Session y={1228} h={138} />
            </Canvas>
            <Legend $right={6} $top={2}><Val $c="#000">101,6270</Val><Val $c="#f01414">63,3803</Val></Legend>
          </Plot>
          <Axis y={1228} h={138} major={[[1275, "200,0000"], [1320, "100,0000"], [1364, ""]]} minor={[1245, 1252, 1260, 1267, 1290, 1297, 1305, 1312, 1334, 1341, 1349, 1356]} close={1232} />
        </Panel>
        <Panel $h={109}>
          <Plot>
            <Canvas x={8} y={1367} w={1330} h={109} cols={minCols}>
              <polygon points={trace(rsiFill, minX, subY)} fill={VOL_RED} />
              <Level y={1418} w={2} />
              <Min d={rsi} c="#f01010" w={3} fy={subY} />
              <Level y={1444} w={2} /><Level y={1471} w={2} />
              <Session y={1367} h={109} />
            </Canvas>
            <Legend $right={6} $top={3}><Val $c="#f01414">70,63</Val></Legend>
          </Plot>
          <Axis y={1367} h={109} major={[[1444, "50,00"]]} minor={[1391, 1404, 1418, 1431, 1458, 1471]} close={1371} />
        </Panel>
        <Panel $h={18}>
          <Plot>
            <Canvas x={8} y={1477} w={1330} h={18} cols={minCols}>
              <Min d="0 1492 34 1492" c="#e02014" w={2} />
              <Session y={1477} h={18} />
            </Canvas>
            <Legend $right={6} $top={3}><Val $c="#1010b0">0,0000</Val><Val $c="#f01414">0,0000</Val></Legend>
          </Plot>
          <Axis y={1477} h={18} close={1481}><rect x="0" y="1492" width="9" height="3" fill="#98989c" /></Axis>
        </Panel>
        <Panel $h={122}>
          <Plot>
            <Canvas x={8} y={1496} w={1330} h={122} cols={minCols} rows={[1557]}>
              <Min d={flowRed} c="#e01410" w={3} fy={subY} />
              <Min d={flowBlack} c="#222" w={1} fy={subY} />
              <Level y={1615} w={2} />
              <Session y={1496} h={122} />
            </Canvas>
            <Legend $right={6} $top={3}><Val $c="#000">138,886,0113</Val><Val $c="#f01414">169,380,2869</Val></Legend>
          </Plot>
          <Axis y={1496} h={122} major={[[1557, "250,000,00"], [1615, ""]]} minor={[1515, 1525, 1536, 1546, 1573, 1584, 1594, 1605]} close={1501} />
        </Panel>
        <Panel $h={86}>
          <Plot>
            <Canvas x={8} y={1619} w={1330} h={86} cols={minCols} rows={[1641]}>
              <Min d={rateRed} c="#e01410" w={3} fy={subY} />
              <Min d={rateBlack} c="#222" w={1} fy={subY} />
              <Level y={1702} w={2} />
              <Session y={1619} h={86} />
            </Canvas>
            <Legend $right={6} $top={3}><Val $c="#000">415,3802</Val><Val $c="#f01414">360,7568</Val></Legend>
          </Plot>
          <Axis y={1619} h={86} major={[[1641, "2,500,0000"], [1702, ""]]} minor={[1629, 1654, 1666, 1678, 1690]} close={1624} />
        </Panel>
        <TimeRow>
          <Time $bold>10/07</Time><Time $bold>10/08</Time><Time>10:00</Time><Time>10:30</Time><Time>11:00</Time><Time $pad={13}>11:06:00</Time>
        </TimeRow>
      </Board>
    </Frame>
  </Window>
);

export default function App() {
  return (
    <Page>
      <GlobalStyle />
      <DayWindow />
      <MinuteWindow />
    </Page>
  );
}
